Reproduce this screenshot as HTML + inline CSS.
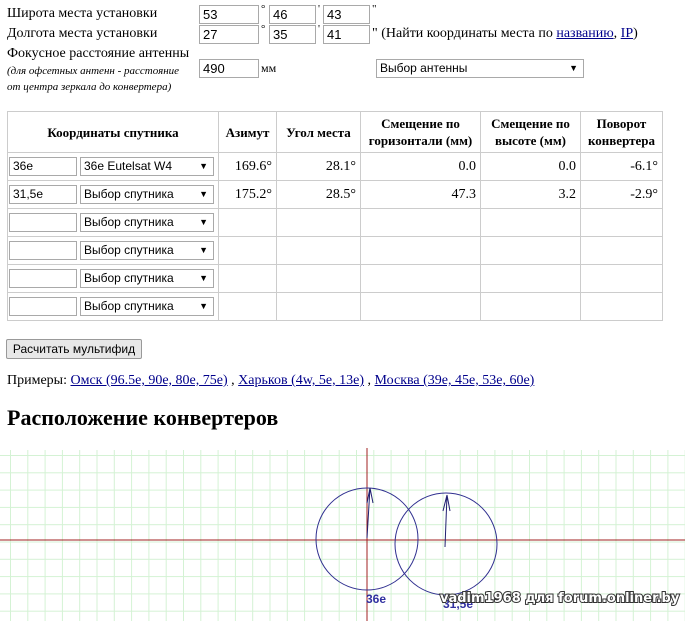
<!DOCTYPE html><html><head><meta charset="utf-8"><style>
body{margin:0;width:685px;height:621px;overflow:hidden;background:#fff;font-family:"Liberation Serif",serif;font-size:14px;color:#000;position:relative}
.a{position:absolute;white-space:nowrap}
.in{position:absolute;height:19px;border:1px solid #a9a9a9;box-sizing:border-box;font:13px "Liberation Sans",sans-serif;padding:1px 3px;line-height:15px;background:#fff}
.sel{position:absolute;height:19px;border:1px solid #a9a9a9;box-sizing:border-box;font:12px "Liberation Sans",sans-serif;padding:1px 3px;line-height:15px;background:#fff}
.sel:after{content:"▼";position:absolute;right:5px;top:1px;font-size:9px}
a{color:#00008b}
table{position:absolute;left:7px;top:111px;border-collapse:collapse;width:656px;table-layout:fixed}
td,th{border:1px solid #ccc;height:28px;padding:0 4px;font-size:14px;box-sizing:border-box;text-align:right}
th{text-align:center;height:41px;font-weight:bold;line-height:17px;font-size:13px;white-space:nowrap;padding:0 2px}
</style></head><body>
<div class="a" style="left:7px;top:6px">Широта места установки</div>
<div class="a" style="left:7px;top:26px">Долгота места установки</div>
<div class="a" style="left:7px;top:46px">Фокусное расстояние антенны</div>
<div class="a" style="left:7px;top:63px;font-size:11px;font-style:italic;line-height:16px">(для офсетных антенн - расстояние<br>от центра зеркала до конвертера)</div>
<div class="in" style="left:199px;top:5px;width:60px">53</div><div class="a" style="left:261px;top:3px;font-size:11px">°</div>
<div class="in" style="left:269px;top:5px;width:47px">46</div><div class="a" style="left:318px;top:3px;font-size:11px">'</div>
<div class="in" style="left:323px;top:5px;width:47px">43</div><div class="a" style="left:372px;top:3px;font-size:11px">"</div>
<div class="in" style="left:199px;top:25px;width:60px">27</div><div class="a" style="left:261px;top:23px;font-size:11px">°</div>
<div class="in" style="left:269px;top:25px;width:47px">35</div><div class="a" style="left:318px;top:23px;font-size:11px">'</div>
<div class="in" style="left:323px;top:25px;width:47px">41</div>
<div class="a" style="left:372px;top:26px">" (Найти координаты места по <a href="#">названию</a>, <a href="#">IP</a>)</div>
<div class="in" style="left:199px;top:59px;width:60px">490</div><div class="a" style="left:261px;top:61px;font-size:12px">мм</div>
<div class="sel" style="left:376px;top:59px;width:208px">Выбор антенны</div>
<table>
<colgroup><col style="width:211px"><col style="width:58px"><col style="width:84px"><col style="width:120px"><col style="width:100px"><col></colgroup>
<tr><th>Координаты спутника</th><th>Азимут</th><th>Угол места</th><th>Смещение по<br>горизонтали (мм)</th><th>Смещение по<br>высоте (мм)</th><th>Поворот<br>конвертера</th></tr>
<tr><td></td><td>169.6°</td><td>28.1°</td><td>0.0</td><td>0.0</td><td>-6.1°</td></tr>
<tr><td></td><td>175.2°</td><td>28.5°</td><td>47.3</td><td>3.2</td><td>-2.9°</td></tr>
<tr><td></td><td></td><td></td><td></td><td></td><td></td></tr>
<tr><td></td><td></td><td></td><td></td><td></td><td></td></tr>
<tr><td></td><td></td><td></td><td></td><td></td><td></td></tr>
<tr><td></td><td></td><td></td><td></td><td></td><td></td></tr>
</table>
<div class="in" style="left:9px;top:157px;width:68px;font-size:12px">36e</div><div class="sel" style="left:80px;top:157px;width:134px">36e Eutelsat W4</div>
<div class="in" style="left:9px;top:185px;width:68px;font-size:12px">31,5e</div><div class="sel" style="left:80px;top:185px;width:134px">Выбор спутника</div>
<div class="in" style="left:9px;top:213px;width:68px"></div><div class="sel" style="left:80px;top:213px;width:134px">Выбор спутника</div>
<div class="in" style="left:9px;top:241px;width:68px"></div><div class="sel" style="left:80px;top:241px;width:134px">Выбор спутника</div>
<div class="in" style="left:9px;top:269px;width:68px"></div><div class="sel" style="left:80px;top:269px;width:134px">Выбор спутника</div>
<div class="in" style="left:9px;top:297px;width:68px"></div><div class="sel" style="left:80px;top:297px;width:134px">Выбор спутника</div>
<div class="a" style="left:6px;top:339px;width:136px;height:20px;border:1px solid #999;background:#e8e8e8;box-sizing:border-box;font:12px 'Liberation Sans',sans-serif;text-align:center;line-height:18px;border-radius:2px">Расчитать мультифид</div>
<div class="a" style="left:7px;top:373px">Примеры: <a href="#">Омск (96.5e, 90e, 80e, 75e)</a> , <a href="#">Харьков (4w, 5e, 13e)</a> , <a href="#">Москва (39e, 45e, 53e, 60e)</a></div>
<div class="a" style="left:7px;top:405px;font-size:22px;font-weight:bold">Расположение конвертеров</div>
<svg class="a" style="left:0;top:448px" width="685" height="173">
<defs><pattern id="g" x="10" y="7" width="17.3" height="17.3" patternUnits="userSpaceOnUse"><path d="M0.5 0V17.3M0 0.5H17.3" stroke="#d4f2d4" stroke-width="1" fill="none"/></pattern></defs>
<rect y="2" width="685" height="171" fill="url(#g)"/>
<line x1="0" y1="92" x2="685" y2="92" stroke="#a02020"/>
<line x1="367" y1="0" x2="367" y2="173" stroke="#a02020"/>
<circle cx="367" cy="91" r="51" fill="none" stroke="#303090"/>
<circle cx="446" cy="96" r="51" fill="none" stroke="#303090"/>
<path d="M367 90L370 40M370 40L367 55M370 40L373 55" stroke="#202070" fill="none"/>
<path d="M445 99L447 47M447 47L443 63M447 47L450 63" stroke="#202070" fill="none"/>
<text x="366" y="155" font-family="Liberation Sans" font-size="12" font-weight="bold" fill="#3030a0">36e</text>
<text x="443" y="160" font-family="Liberation Sans" font-size="12" font-weight="bold" fill="#3030a0">31,5e</text>
<text x="440" y="154" font-family="DejaVu Sans" font-size="13" font-weight="bold" fill="#fff" stroke="#333" stroke-width="2" paint-order="stroke">vadim1968 для forum.onliner.by</text>
</svg>
</body></html>
